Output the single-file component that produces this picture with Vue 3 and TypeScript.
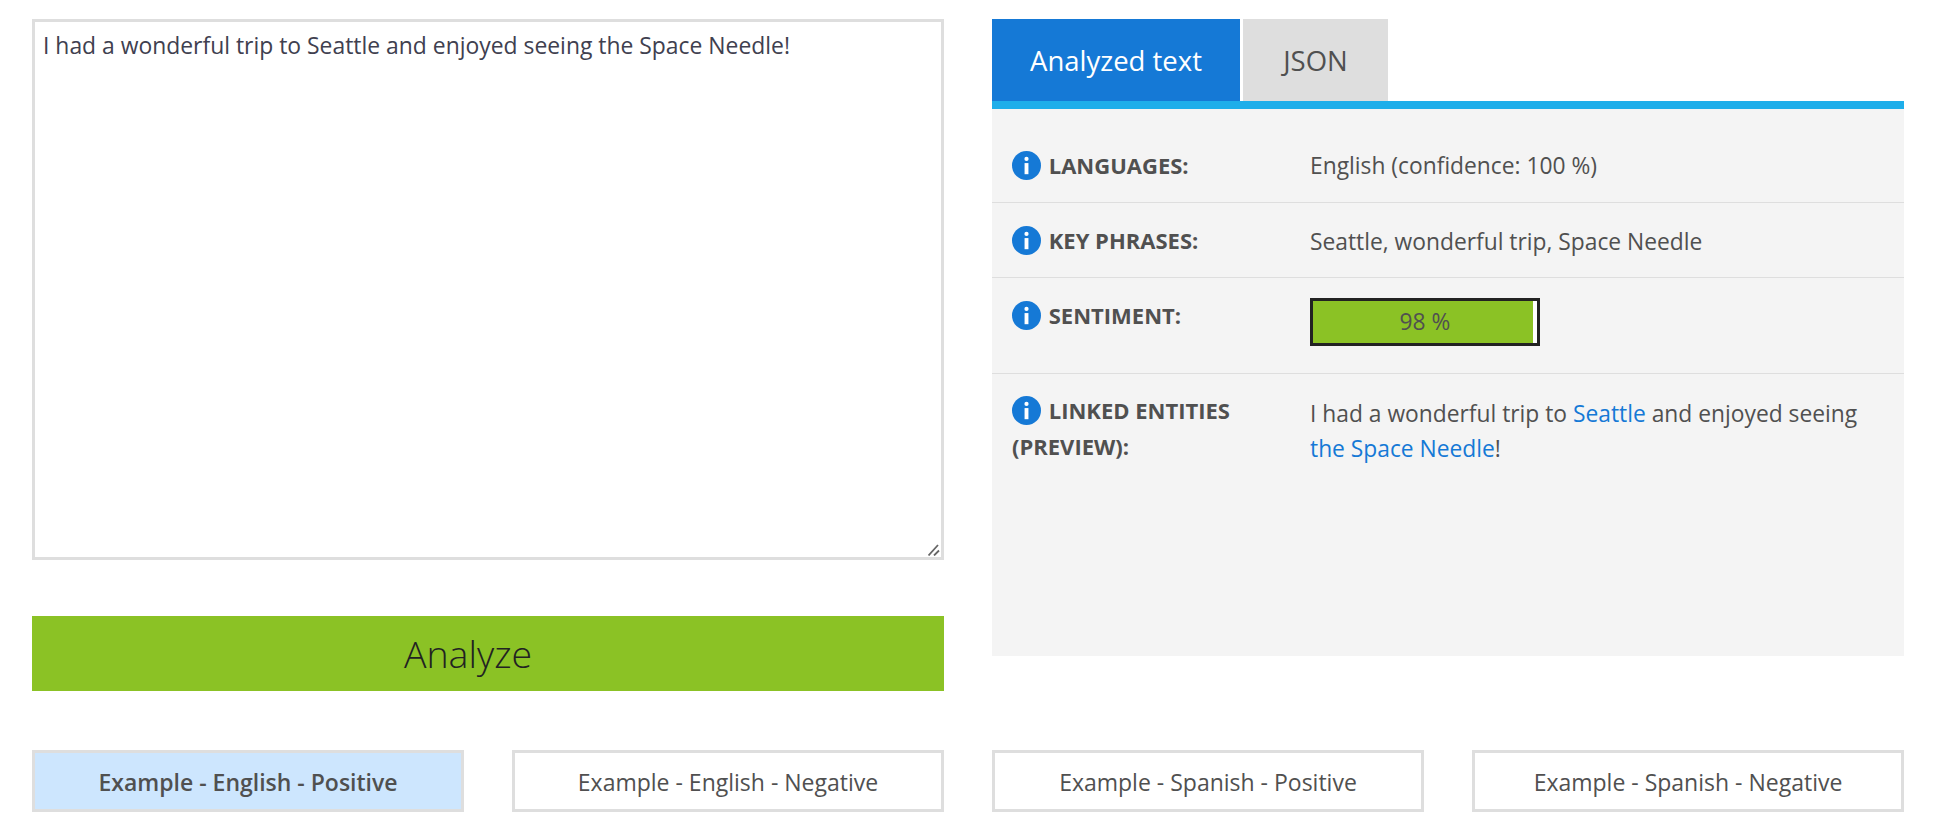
<script setup lang="ts">
const text = 'I had a wonderful trip to Seattle and enjoyed seeing the Space Needle!'
const examples = [
  { label: 'Example - English - Positive', active: true },
  { label: 'Example - English - Negative', active: false },
  { label: 'Example - Spanish - Positive', active: false },
  { label: 'Example - Spanish - Negative', active: false },
]
const score = 98
</script>

<template>
  <div class="page">
    <div class="main">
      <div class="left">
        <div class="input-wrap">
          <textarea class="input" :value="text"></textarea>
          <svg class="grip" viewBox="0 0 12 12"><path d="M0.5 11.5 L10 1 M6 11.5 L11 6.5" stroke="#666" stroke-width="1.8" fill="none"/></svg>
        </div>
        <button class="analyze">Analyze</button>
      </div>
      <div class="right">
        <div class="tabs">
          <div class="tab active">Analyzed text</div>
          <div class="tab">JSON</div>
        </div>
        <div class="panel">
          <div class="row r1">
            <div class="label">
              <svg class="info" viewBox="0 0 30 30"><circle cx="15" cy="15" r="15" fill="#1579d6"/><circle cx="15" cy="8.2" r="2.2" fill="#fff"/><rect x="13" y="12.5" width="4" height="11.5" fill="#fff"/></svg>
              LANGUAGES:
            </div>
            <div class="value">English (confidence: 100 %)</div>
          </div>
          <div class="row r2">
            <div class="label">
              <svg class="info" viewBox="0 0 30 30"><circle cx="15" cy="15" r="15" fill="#1579d6"/><circle cx="15" cy="8.2" r="2.2" fill="#fff"/><rect x="13" y="12.5" width="4" height="11.5" fill="#fff"/></svg>
              KEY PHRASES:
            </div>
            <div class="value">Seattle, wonderful trip, Space Needle</div>
          </div>
          <div class="row r3">
            <div class="label">
              <svg class="info" viewBox="0 0 30 30"><circle cx="15" cy="15" r="15" fill="#1579d6"/><circle cx="15" cy="8.2" r="2.2" fill="#fff"/><rect x="13" y="12.5" width="4" height="11.5" fill="#fff"/></svg>
              SENTIMENT:
            </div>
            <div class="value value-meter">
              <div class="meter">
                <div class="fill" :style="{ width: score + '%' }"></div>
                <span class="pct">{{ score }} %</span>
              </div>
            </div>
          </div>
          <div class="row r4">
            <div class="label">
              <svg class="info" viewBox="0 0 30 30"><circle cx="15" cy="15" r="15" fill="#1579d6"/><circle cx="15" cy="8.2" r="2.2" fill="#fff"/><rect x="13" y="12.5" width="4" height="11.5" fill="#fff"/></svg>
              LINKED ENTITIES (PREVIEW):
            </div>
            <div class="value">I had a wonderful trip to <a class="link">Seattle</a> and enjoyed seeing <a class="link">the Space Needle</a>!</div>
          </div>
        </div>
      </div>
    </div>
    <div class="examples">
      <button v-for="e in examples" :key="e.label" class="example" :class="{ on: e.active }">{{ e.label }}</button>
    </div>
  </div>
</template>

<style scoped>
.page {
  width: 1872px;
  padding: 19px 0 0 32px;
  font-family: "Open Sans", "Noto Sans", sans-serif;
  color: #505050;
  font-size: 23px;
}
.main {
  display: grid;
  grid-template-columns: 912px 912px;
  column-gap: 48px;
}
.left { display: flex; flex-direction: column; }
.input-wrap { position: relative; height: 541px; }
.input {
  box-sizing: border-box;
  width: 912px;
  height: 541px;
  border: 3px solid #dedede;
  padding: 9px 8px;
  margin: 0;
  outline: none;
  resize: none;
  font-family: inherit;
  font-size: 22.9px;
  line-height: 30px;
  color: #40404f;
  background: #fff;
  display: block;
}
.grip {
  position: absolute;
  right: 4px;
  bottom: 4px;
  width: 12px;
  height: 12px;
}
.analyze {
  margin-top: 56px;
  height: 75px;
  border: 0;
  background: #8bc225;
  font-family: inherit;
  font-size: 37.5px;
  font-weight: 300;
  color: #222;
  padding: 0 40px 0 0;
}
.tabs { display: flex; gap: 3px; height: 82px; }
.tab {
  background: #dedede;
  width: 145px;
  display: flex;
  align-items: center;
  justify-content: center;
  font-size: 27.5px;
  color: #505050;
}
.tab.active { width: 248px; background: #1579d6; color: #fff; }
.panel {
  border-top: 8px solid #1eaeea;
  background: #f4f4f4;
  height: 555px;
  box-sizing: border-box;
}
.row {
  display: grid;
  grid-template-columns: 298px 1fr;
  padding-left: 20px;
  padding-right: 30px;
  border-bottom: 1px solid #dedede;
  box-sizing: border-box;
  line-height: 36px;
}
.r1 { height: 94px; padding-top: 38px; }
.r2 { height: 75px; padding-top: 20px; }
.r3 { height: 96px; padding-top: 20px; }
.r4 { border-bottom: 0; padding-top: 19px; }
.label {
  font-weight: 700;
  font-size: 22px;
  color: #505050;
}
.r2 .label, .r3 .label, .r4 .label { margin-top: -1px; }
.info {
  width: 29px;
  height: 29px;
  vertical-align: -6px;
  margin-right: 2px;
}
.value { font-size: 22.8px; color: #505050; padding-top: 1px; line-height: 35px; }
.r4 .value { padding-top: 3px; }
.value-meter { padding-top: 0; }
.meter {
  position: relative;
  box-sizing: border-box;
  width: 230px;
  height: 48px;
  border: 3px solid #222;
  background: #fff;
}
.fill { height: 100%; background: #8bc225; }
.pct {
  position: absolute;
  inset: 1px 0 0;
  display: flex;
  align-items: center;
  justify-content: center;
  line-height: 1;
}
.link { color: #1579d6; }
.examples {
  display: grid;
  grid-template-columns: 432px 432px 432px 432px;
  justify-content: space-between;
  margin-top: 59px;
  width: 1872px;
}
.example {
  box-sizing: border-box;
  height: 62px;
  border: 3px solid #dedede;
  background: #fff;
  font-family: inherit;
  font-size: 23px;
  color: #505050;
  padding: 1px 0 0;
}
.example.on { background: #cde6fe; font-weight: 600; }
</style>
